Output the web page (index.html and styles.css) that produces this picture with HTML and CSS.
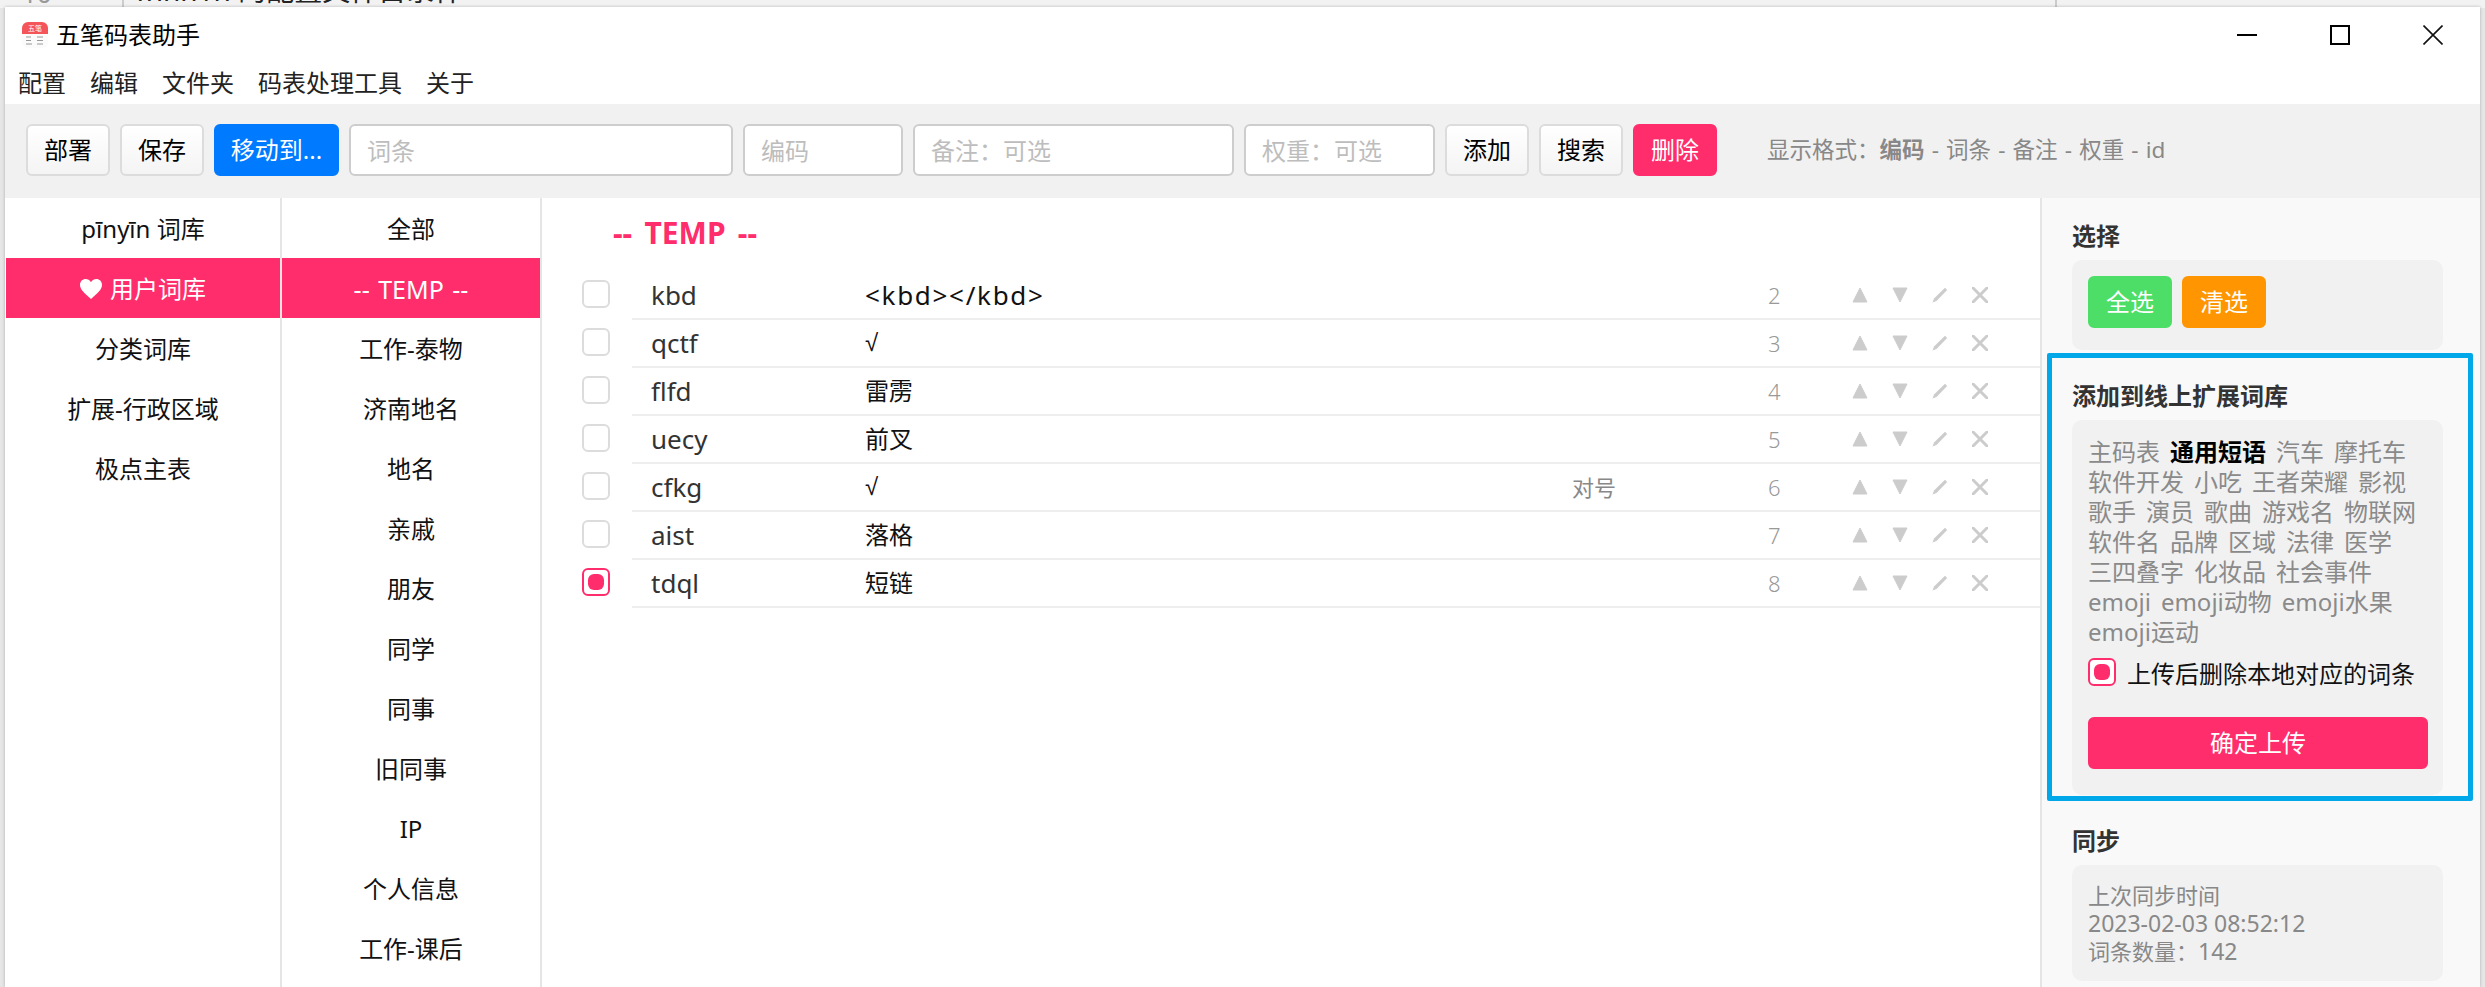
FILE: index.html
```html
<!DOCTYPE html>
<html lang="zh-CN">
<head>
<meta charset="utf-8">
<title>五笔码表助手</title>
<link rel="stylesheet" href="styles.css">
</head>
<body>
<div class="backdrop">
  <span class="bd-num">10</span>
  <span class="bd-line"></span>
  <span class="bd-text">fnnn1n 的配置文件目录样</span>
  <span class="bd-line2"></span>
</div>
<div class="window">
  <header class="titlebar">
    <svg class="logo" viewBox="0 0 26 26" width="26" height="26">
      <rect width="26" height="26" rx="6" fill="#fbfbfb"/>
      <path d="M0 12V6a6 6 0 0 1 6-6h14a6 6 0 0 1 6 6v6z" fill="#f4555a"/>
      <text x="13" y="9" font-size="7" fill="#fff" text-anchor="middle" font-family="Noto Sans CJK SC">五笔</text>
      <path d="M4 15h5M15 15h6M4 18.500h5M15 18.500h6M4 22h6M15 22h6" stroke="#999" stroke-width="1"/>
    </svg>
    <span class="app-title">五笔码表助手</span>
    <div class="win-controls">
      <svg width="20" height="20" viewBox="0 0 20 20"><path d="M0 10h20" stroke="#000" stroke-width="2"/></svg>
      <svg width="20" height="20" viewBox="0 0 20 20"><rect x="1" y="1" width="18" height="18" fill="none" stroke="#000" stroke-width="2"/></svg>
      <svg width="20" height="20" viewBox="0 0 20 20"><path d="M.5 .5l19 19M19.500 .5l-19 19" stroke="#111" stroke-width="1.600"/></svg>
    </div>
  </header>
  <nav class="menu">
    <span>配置</span><span>编辑</span><span>文件夹</span><span>码表处理工具</span><span>关于</span>
  </nav>
  <div class="toolbar">
    <button class="btn w84">部署</button>
    <button class="btn w84">保存</button>
    <button class="btn btn-blue w125">移动到...</button>
    <input class="field w-word" placeholder="词条">
    <input class="field w-code" placeholder="编码">
    <input class="field w-note" placeholder="备注：可选">
    <input class="field w-weight" placeholder="权重：可选">
    <button class="btn w84">添加</button>
    <button class="btn w84">搜索</button>
    <button class="btn btn-pink w84">删除</button>
    <div class="format">显示格式：<b>编码</b> - 词条 - 备注 - 权重 - id</div>
  </div>
  <div class="content">
    <ul class="list col-a">
      <li>pīnyīn 词库</li>
      <li class="active"><svg class="heart" viewBox="0 0 22 20" width="22" height="20"><path d="M11 20C4 14 0 10.500 0 5.800 0 2.300 2.600 0 5.600 0 7.800 0 9.800 1.200 11 3.200 12.200 1.200 14.200 0 16.400 0 19.400 0 22 2.300 22 5.800 22 10.500 18 14 11 20z" fill="#fff"/></svg>用户词库</li>
      <li>分类词库</li>
      <li>扩展-行政区域</li>
      <li>极点主表</li>
    </ul>
    <ul class="list col-b">
      <li>全部</li>
      <li class="active temp">-- TEMP --</li>
      <li>工作-泰物</li>
      <li>济南地名</li>
      <li>地名</li>
      <li>亲戚</li>
      <li>朋友</li>
      <li>同学</li>
      <li>同事</li>
      <li>旧同事</li>
      <li>IP</li>
      <li>个人信息</li>
      <li>工作-课后</li>
    </ul>
    <main class="main">
      <h2 class="group-title">-- TEMP --</h2>

      <div class="entry">
        <span class="check"></span>
        <div class="entry-body"><span class="code">kbd</span><span class="word tag-text">&lt;kbd&gt;&lt;/kbd&gt;</span><span class="note"></span><span class="id">2</span>
          <div class="ops">
            <svg viewBox="0 0 16 16"><path class="fill" d="M8 1L15 15H1z"/></svg>
            <svg viewBox="0 0 16 16"><path class="fill" d="M1 1H15L8 15z"/></svg>
            <svg viewBox="0 0 16 16"><path class="solid" d="M.5 15.500L2 11.500 13 .8 15.200 3 4.500 14z"/></svg>
            <svg viewBox="0 0 16 16"><path class="stroke" d="M1 1l14 14M15 1L1 15"/></svg>
          </div>
        </div>
      </div>
      <div class="entry">
        <span class="check"></span>
        <div class="entry-body"><span class="code">qctf</span><span class="word radical">√</span><span class="note"></span><span class="id">3</span>
          <div class="ops">
            <svg viewBox="0 0 16 16"><path class="fill" d="M8 1L15 15H1z"/></svg>
            <svg viewBox="0 0 16 16"><path class="fill" d="M1 1H15L8 15z"/></svg>
            <svg viewBox="0 0 16 16"><path class="solid" d="M.5 15.500L2 11.500 13 .8 15.200 3 4.500 14z"/></svg>
            <svg viewBox="0 0 16 16"><path class="stroke" d="M1 1l14 14M15 1L1 15"/></svg>
          </div>
        </div>
      </div>
      <div class="entry">
        <span class="check"></span>
        <div class="entry-body"><span class="code">flfd</span><span class="word">雷雳</span><span class="note"></span><span class="id">4</span>
          <div class="ops">
            <svg viewBox="0 0 16 16"><path class="fill" d="M8 1L15 15H1z"/></svg>
            <svg viewBox="0 0 16 16"><path class="fill" d="M1 1H15L8 15z"/></svg>
            <svg viewBox="0 0 16 16"><path class="solid" d="M.5 15.500L2 11.500 13 .8 15.200 3 4.500 14z"/></svg>
            <svg viewBox="0 0 16 16"><path class="stroke" d="M1 1l14 14M15 1L1 15"/></svg>
          </div>
        </div>
      </div>
      <div class="entry">
        <span class="check"></span>
        <div class="entry-body"><span class="code">uecy</span><span class="word">前叉</span><span class="note"></span><span class="id">5</span>
          <div class="ops">
            <svg viewBox="0 0 16 16"><path class="fill" d="M8 1L15 15H1z"/></svg>
            <svg viewBox="0 0 16 16"><path class="fill" d="M1 1H15L8 15z"/></svg>
            <svg viewBox="0 0 16 16"><path class="solid" d="M.5 15.500L2 11.500 13 .8 15.200 3 4.500 14z"/></svg>
            <svg viewBox="0 0 16 16"><path class="stroke" d="M1 1l14 14M15 1L1 15"/></svg>
          </div>
        </div>
      </div>
      <div class="entry">
        <span class="check"></span>
        <div class="entry-body"><span class="code">cfkg</span><span class="word radical">√</span><span class="note">对号</span><span class="id">6</span>
          <div class="ops">
            <svg viewBox="0 0 16 16"><path class="fill" d="M8 1L15 15H1z"/></svg>
            <svg viewBox="0 0 16 16"><path class="fill" d="M1 1H15L8 15z"/></svg>
            <svg viewBox="0 0 16 16"><path class="solid" d="M.5 15.500L2 11.500 13 .8 15.200 3 4.500 14z"/></svg>
            <svg viewBox="0 0 16 16"><path class="stroke" d="M1 1l14 14M15 1L1 15"/></svg>
          </div>
        </div>
      </div>
      <div class="entry">
        <span class="check"></span>
        <div class="entry-body"><span class="code">aist</span><span class="word">落格</span><span class="note"></span><span class="id">7</span>
          <div class="ops">
            <svg viewBox="0 0 16 16"><path class="fill" d="M8 1L15 15H1z"/></svg>
            <svg viewBox="0 0 16 16"><path class="fill" d="M1 1H15L8 15z"/></svg>
            <svg viewBox="0 0 16 16"><path class="solid" d="M.5 15.500L2 11.500 13 .8 15.200 3 4.500 14z"/></svg>
            <svg viewBox="0 0 16 16"><path class="stroke" d="M1 1l14 14M15 1L1 15"/></svg>
          </div>
        </div>
      </div>
      <div class="entry">
        <span class="check checked"></span>
        <div class="entry-body"><span class="code">tdql</span><span class="word">短链</span><span class="note"></span><span class="id">8</span>
          <div class="ops">
            <svg viewBox="0 0 16 16"><path class="fill" d="M8 1L15 15H1z"/></svg>
            <svg viewBox="0 0 16 16"><path class="fill" d="M1 1H15L8 15z"/></svg>
            <svg viewBox="0 0 16 16"><path class="solid" d="M.5 15.500L2 11.500 13 .8 15.200 3 4.500 14z"/></svg>
            <svg viewBox="0 0 16 16"><path class="stroke" d="M1 1l14 14M15 1L1 15"/></svg>
          </div>
        </div>
      </div>
    </main>
    <aside class="side">
      <section class="side-sec">
        <h3 class="side-title">选择</h3>
        <div class="side-box box-select">
          <button class="btn btn-green w84">全选</button>
          <button class="btn btn-orange w84">清选</button>
        </div>
      </section>
      <section class="side-sec">
        <h3 class="side-title">添加到线上扩展词库</h3>
        <div class="side-box box-upload">
          <div class="tags">
            <span>主码表</span><span class="on">通用短语</span><span>汽车</span><span>摩托车</span><span>软件开发</span><span>小吃</span><span>王者荣耀</span><span>影视</span><span>歌手</span><span>演员</span><span>歌曲</span><span>游戏名</span><span>物联网</span><span>软件名</span><span>品牌</span><span>区域</span><span>法律</span><span>医学</span><span>三四叠字</span><span>化妆品</span><span>社会事件</span><span>emoji</span><span>emoji动物</span><span>emoji水果</span><span>emoji运动</span>
          </div>
          <label class="del-opt"><span class="check checked"></span>上传后删除本地对应的词条</label>
          <button class="btn btn-pink btn-wide">确定上传</button>
        </div>
      </section>
      <section class="side-sec">
        <h3 class="side-title">同步</h3>
        <div class="side-box box-sync">上次同步时间<br><span class="digits">2023-02-03 08:52:12</span><br>词条数量：<span class="digits">142</span></div>
      </section>
    </aside>
  </div>
</div>
<div class="annotation"></div>
</body>
</html>
```
FILE: styles.css
```css
* { box-sizing: border-box; }
html, body { margin: 0; padding: 0; height: 987px; overflow: hidden; }
body {
  background: #e6e6e6;
  font-family: "Noto Sans", "Noto Sans CJK SC", sans-serif;
  font-size: 24px;
  color: #000;
  position: relative;
}
ul { list-style: none; margin: 0; padding: 0; }
h2, h3 { margin: 0; }

.backdrop { position: absolute; left: 0; top: 0; width: 100%; height: 8px; overflow: hidden; background: #f2f2f2; }
.bd-num { position: absolute; left: 22px; top: -22px; font-size: 26px; line-height: 30px; color: #999; }
.bd-line { position: absolute; left: 122px; top: 0; width: 2px; height: 8px; background: #ccc; }
.bd-text { position: absolute; left: 136px; top: -28px; font-size: 28px; line-height: 36px; color: #222; white-space: nowrap; }
.bd-line2 { position: absolute; left: 2055px; top: 0; width: 2px; height: 8px; background: #ccc; }

.window {
  position: absolute;
  left: 5px; top: 7px;
  width: 2475px; height: 980px;
  background: #fff;
  display: flex;
  flex-direction: column;
  box-shadow: 0 0 3px rgba(0,0,0,.25);
}

.titlebar { height: 55px; flex: none; display: flex; align-items: center; padding-left: 17px; }
.logo { flex: none; margin-right: 8px; }
.app-title { font-size: 24px; line-height: 30px; }
.win-controls { margin-left: auto; display: flex; gap: 73px; padding-right: 37px; }
.win-controls svg { display: block; }

.menu { height: 42px; flex: none; display: flex; gap: 24px; padding-left: 13px; align-items: center; color: #222; line-height: 30px; }

.toolbar { height: 94px; flex: none; background: #f1f1f1; display: flex; align-items: flex-start; gap: 10px; padding: 20px 0 0 21px; }

.btn {
  height: 52px;
  border: 2px solid #dcdcdc;
  border-radius: 6px;
  background: linear-gradient(#fff, #f4f4f4);
  font: inherit;
  color: #000;
  padding: 0;
  flex: none;
  line-height: 1;
}
.w84 { width: 84px; }
.w125 { width: 125px; }
.btn-blue { background: #007aff; border-color: #007aff; color: #fff; }
.btn-pink { background: #ff2d6c; border-color: #ff2d6c; color: #fff; }
.btn-green { background: #4cde66; border-color: #4cde66; color: #fff; }
.btn-orange { background: #ff9500; border-color: #ff9500; color: #fff; }

.field {
  height: 52px;
  border: 2px solid #cdcdcd;
  border-radius: 6px;
  background: #fff;
  font: inherit;
  padding: 0 16px;
  flex: none;
  outline: none;
}
.field::placeholder { color: #bdbdbd; opacity: 1; }
.w-word { width: 384px; }
.w-code { width: 160px; }
.w-note { width: 321px; }
.w-weight { width: 191px; }

.format { margin-left: 40px; font-size: 22.500px; line-height: 52px; color: #888; white-space: nowrap; word-spacing: 1.300px; }

.content { flex: 1; min-height: 0; display: flex; overflow: hidden; }
.list { flex: none; border-right: 2px solid #e5e5e5; overflow: hidden; }
.col-a { width: 276px; margin-left: 1px; }
.col-b { width: 260px; }
.list li { height: 60px; padding-top: 2px; display: flex; align-items: center; justify-content: center; color: #111; line-height: 30px; }
.list li.active { background: #ff2d6c; color: #fff; }
.list li.temp { font-size: 25px; word-spacing: 2px; }
.heart { margin-right: 8px; }

.main { flex: 1; min-width: 0; }
.group-title { height: 74px; padding: 0 0 0 71px; font-size: 30px; font-weight: 700; line-height: 70px; word-spacing: 4.500px; color: #ff2d6c; }

.entry { display: flex; align-items: flex-start; padding-left: 40px; }
.check {
  flex: none;
  width: 28px; height: 28px;
  border: 2px solid #dcdcdc;
  border-radius: 6px;
  background: #fff;
  display: flex;
  align-items: center;
  justify-content: center;
}
.entry .check { margin-top: 8px; }
.check.checked { border-color: #ff2d6c; }
.check.checked::after { content: ""; width: 16px; height: 16px; border-radius: 6px; background: #ff2d6c; }

.entry-body {
  flex: 1;
  margin-left: 22px;
  height: 48px;
  padding-left: 19px;
  border-bottom: 2px solid #eee;
  display: grid;
  grid-template-columns: 214px 707px 196px 72px 1fr;
  align-items: center;
  line-height: 30px;
}
.code { color: #333; font-size: 26px; }
.word { color: #111; }
.tag-text { font-size: 26px; letter-spacing: 1.700px; }
.radical { font-family: "Liberation Sans", sans-serif; }
.note { color: #888; font-size: 22px; }
.id { color: #999; font-size: 22px; font-weight: 300; }
.ops { display: flex; }
.ops svg { width: 16px; height: 16px; margin: 0 12px; display: block; }
.ops .fill { fill: #ccc; stroke: #ccc; stroke-width: 1; stroke-linejoin: round; }
.ops .solid { fill: #ccc; }
.ops .stroke { fill: none; stroke: #ccc; stroke-width: 3; stroke-linecap: round; }

.side { flex: none; width: 440px; background: #f9f9f9; border-left: 2px solid #e5e5e5; padding: 21px 37px 0 30px; }
.side-sec { margin-bottom: 29px; }
.side-title { height: 33px; margin-bottom: 8px; font-size: 24px; line-height: 33px; font-weight: 700; color: #333; }
.side-box { background: #f1f1f1; border-radius: 10px; padding: 16px; }
.box-select { height: 90px; display: flex; gap: 10px; padding: 16px; }
.box-upload { height: 375px; padding: 17px 15px 0 16px; }
.tags { display: flex; flex-wrap: wrap; column-gap: 10px; line-height: 30px; color: #8a8a8a; }
.tags .on { color: #000; font-weight: 700; }
.del-opt { display: flex; align-items: center; height: 30px; margin-top: 10px; gap: 11px; font-size: 24px; color: #111; }
.btn-wide { display: block; width: 340px; margin-top: 30px; font-size: 24px; }
.box-sync { height: 116px; font-size: 22px; line-height: 28px; color: #888; }
.digits { font-size: 23px; }

.annotation { position: absolute; left: 2047px; top: 353px; width: 426px; height: 448px; border: 5px solid #00a8ea; border-radius: 2px; pointer-events: none; }
```
